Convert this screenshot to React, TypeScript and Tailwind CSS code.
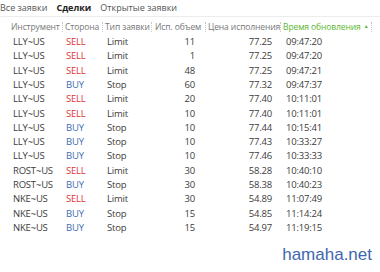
type Row = [string, 'SELL' | 'BUY', string, string, string, string];

const rows: Row[] = [
  ['LLY~US', 'SELL', 'Limit', '11', '77.25', '09:47:20'],
  ['LLY~US', 'SELL', 'Limit', '1', '77.25', '09:47:20'],
  ['LLY~US', 'SELL', 'Limit', '48', '77.25', '09:47:21'],
  ['LLY~US', 'BUY', 'Stop', '60', '77.32', '09:47:37'],
  ['LLY~US', 'SELL', 'Limit', '20', '77.40', '10:11:01'],
  ['LLY~US', 'SELL', 'Limit', '10', '77.40', '10:11:01'],
  ['LLY~US', 'BUY', 'Stop', '10', '77.44', '10:15:41'],
  ['LLY~US', 'BUY', 'Stop', '10', '77.43', '10:33:27'],
  ['LLY~US', 'BUY', 'Stop', '10', '77.46', '10:33:33'],
  ['ROST~US', 'SELL', 'Limit', '30', '58.28', '10:40:10'],
  ['ROST~US', 'BUY', 'Stop', '30', '58.38', '10:40:23'],
  ['NKE~US', 'SELL', 'Limit', '30', '54.89', '11:07:49'],
  ['NKE~US', 'BUY', 'Stop', '15', '54.85', '11:14:24'],
  ['NKE~US', 'BUY', 'Stop', '15', '54.97', '11:19:15'],
];

function Sep() {
  return <span className="shrink-0 h-[10px] border-l border-dotted border-[#c8c8c8]" />;
}

export default function App() {
  return (
    <div className="relative w-[380px] h-[272px] bg-white overflow-hidden whitespace-nowrap text-[9.5px] text-[#3c3c3c] font-['Open_Sans',sans-serif]">
      {/* Tabs */}
      <div className="flex h-[17px] items-center gap-[9px] border-b border-[#ececec] text-[9px] text-[#555]">
        <span>Все заявки</span>
        <span className="font-bold text-[#222]">Сделки</span>
        <span>Открытые заявки</span>
      </div>

      {/* Header */}
      <div className="flex h-[16px] items-center mt-[2px] text-[8.5px] tracking-[-0.1px] text-[#777]">
        <span className="w-[62px] shrink-0 pl-[11px]">Инструмент</span>
        <Sep />
        <span className="w-[39px] shrink-0 pl-[2px]">Сторона</span>
        <Sep />
        <span className="w-[48px] shrink-0 pl-[2px]">Тип заявки</span>
        <Sep />
        <span className="w-[53px] shrink-0 pl-[3px]">Исп. объем</span>
        <Sep />
        <span className="w-[74px] shrink-0 pl-[2px]">Цена исполнения</span>
        <Sep />
        <span className="w-[90px] shrink-0 pl-[2px] text-[#5cb630] flex items-center gap-[3px]">
          Время обновления
          <span className="text-[5px]">▲</span>
        </span>
        <Sep />
      </div>

      {/* Rows */}
      <div className="flex flex-col tracking-[-0.2px]">
        {rows.map((r, i) => (
          <div key={i} className="flex h-[14.3px] items-center">
            <span className="w-[66px] shrink-0 pl-[13px]">{r[0]}</span>
            <span
              className={`w-[41px] shrink-0 ${r[1] === 'SELL' ? 'text-[#e0353b]' : 'text-[#3d6db3]'}`}
            >
              {r[1]}
            </span>
            <span className="w-[50px] shrink-0">{r[2]}</span>
            <span className="w-[38px] shrink-0 text-right">{r[3]}</span>
            <span className="w-[77px] shrink-0 text-right">{r[4]}</span>
            <span className="pl-[14px]">{r[5]}</span>
          </div>
        ))}
      </div>

      {/* Watermark */}
      <div className="absolute right-[8px] bottom-[5px] text-[17px] text-[#3f67b0] font-['Liberation_Sans',sans-serif]">
        hamaha.net
      </div>
    </div>
  );
}
